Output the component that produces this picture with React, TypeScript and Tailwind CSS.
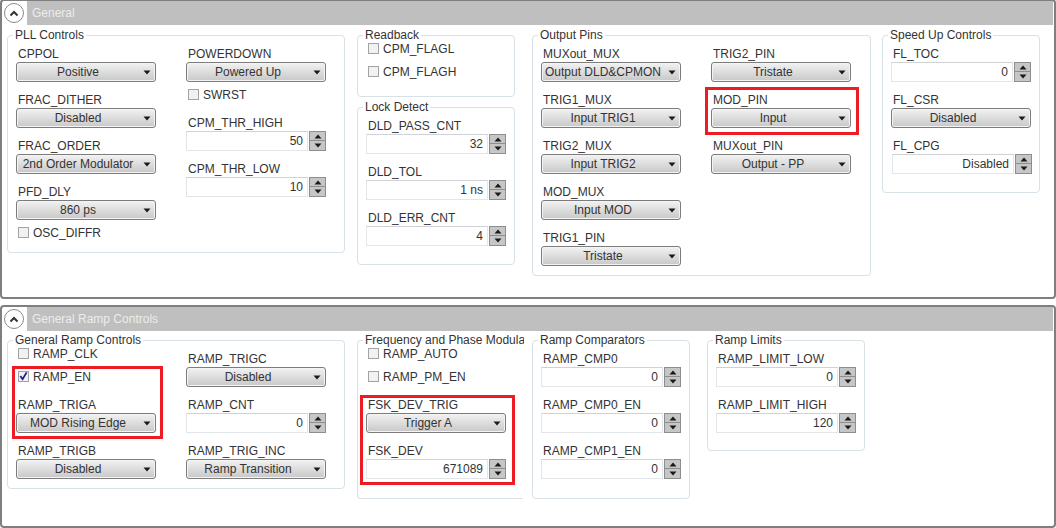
import React from 'react';

const Triangle: React.FC<{ up?: boolean; className?: string }> = ({ up, className }) => (
  <svg width="8" height="5" viewBox="0 0 8 5" className={className}>
    <path d={up ? 'M4 0.5 L7.5 4.5 L0.5 4.5 Z' : 'M0.5 0.5 L7.5 0.5 L4 4.5 Z'} fill="#1a1a1a" />
  </svg>
);

const Combo: React.FC<{ value: string }> = ({ value }) => (
  <div className="relative flex h-[20px] w-[140px] items-center justify-center rounded-[3px] border border-[#7c7c7c] bg-gradient-to-b from-[#f2f2f2] to-[#c8c8c8] pr-[16px] text-[#333333] shadow-[inset_0_0_0_1px_#f4f4f4]">
    <span className="whitespace-nowrap">{value}</span>
    <Triangle className="absolute right-[4px] top-[7px]" />
  </div>
);

const Spinner: React.FC<{ value: string; shifted?: boolean }> = ({ value, shifted }) => (
  <div className={`flex h-[20px] w-[140px] gap-px ${shifted ? 'ml-px' : ''}`}>
    <div className="flex h-[20px] w-[122px] items-center justify-end border border-[#e1e6ea] border-t-[#cfd3d6] bg-white pr-[4px] text-[#333333]">
      {value}
    </div>
    <div className="flex w-[17px] flex-col">
      <div className="flex h-[10px] items-center justify-center border border-[#8e8e8e] bg-[#c6c6c6]">
        <Triangle up />
      </div>
      <div className="flex h-[10px] items-center justify-center border border-t-0 border-[#8e8e8e] bg-[#c6c6c6]">
        <Triangle />
      </div>
    </div>
  </div>
);

const Field: React.FC<{ label: string; children: React.ReactNode }> = ({ label, children }) => (
  <div className="mb-[8px]">
    <div className="h-[18px] pl-[2px] leading-[20px] text-[#333333]">{label}</div>
    {children}
  </div>
);

const Check: React.FC<{ label: string; checked?: boolean; className?: string }> = ({ label, checked, className }) => (
  <div className={`flex h-[22px] items-center pl-[2px] text-[#333333] ${className ?? ''}`}>
    <div className="flex h-[11px] w-[11px] items-center justify-center border border-[#a3a3a3] bg-[#f1f1f1]">
      {checked && (
        <svg width="10" height="10" viewBox="0 0 10 10">
          <path d="M1.5 5 L4 8.5 L8.5 1" fill="none" stroke="#1c1c8c" strokeWidth="2" />
        </svg>
      )}
    </div>
    <span className="ml-[4px] pt-[2px]">{label}</span>
  </div>
);

const Box: React.FC<{ title: string; className: string; legendClass?: string; children: React.ReactNode }> = ({
  title,
  className,
  legendClass,
  children,
}) => (
  <div className={`relative flex gap-[30px] rounded-[4px] border border-[#d8e1e6] pl-[8px] pt-[8px] ${className}`}>
    <div className={`absolute left-[5px] top-[-9px] h-[16px] overflow-hidden whitespace-nowrap bg-white px-[2px] leading-[16px] text-[#333333] ${legendClass ?? ''}`}>
      {title}
    </div>
    {children}
  </div>
);

const Col: React.FC<{ children: React.ReactNode; className?: string }> = ({ children, className }) => (
  <div className={`flex w-[140px] flex-col ${className ?? ''}`}>{children}</div>
);

const PanelHeader: React.FC<{ title: string }> = ({ title }) => (
  <div className="flex h-[24px] shrink-0">
    <div className="relative w-[25px]">
      <div className="absolute left-[2px] top-[2px] flex h-[20px] w-[20px] items-center justify-center rounded-full border border-[#8a8a8a] bg-white">
        <svg width="10" height="7" viewBox="0 0 10 7">
          <path d="M1.5 5.5 L5 2 L8.5 5.5" fill="none" stroke="#333333" strokeWidth="2" />
        </svg>
      </div>
    </div>
    <div className="mr-px flex flex-1 items-center bg-[#bfbfbf] pl-[5px] text-[#ececec]">{title}</div>
  </div>
);

const RedBox: React.FC<{ className: string }> = ({ className }) => (
  <div className={`pointer-events-none absolute border-[3px] border-[#ed1c24] ${className}`} />
);

export default function App() {
  return (
    <div className="relative h-[528px] w-[1056px] overflow-hidden bg-white font-['Liberation_Sans',Arial,sans-serif] text-[12px]">
      {/* General */}
      <div className="-mt-px flex h-[300px] flex-col rounded-[4px] border-2 border-[#7f7f7f]">
        <PanelHeader title="General" />
        <div className="ml-[5px] mt-[10px] flex items-start">
          <Box title="PLL Controls" className="h-[218px] w-[338px]">
            <Col>
              <Field label="CPPOL"><Combo value="Positive" /></Field>
              <Field label="FRAC_DITHER"><Combo value="Disabled" /></Field>
              <Field label="FRAC_ORDER"><Combo value="2nd Order Modulator" /></Field>
              <Field label="PFD_DLY"><Combo value="860 ps" /></Field>
              <Check label="OSC_DIFFR" className="-mt-[7px]" />
            </Col>
            <Col>
              <Field label="POWERDOWN"><Combo value="Powered Up" /></Field>
              <Check label="SWRST" className="-mt-[7px] mb-[8px]" />
              <Field label="CPM_THR_HIGH"><Spinner value="50" /></Field>
              <Field label="CPM_THR_LOW"><Spinner value="10" /></Field>
            </Col>
          </Box>
          <div className="ml-[12px] flex flex-col gap-[10px]">
            <Box title="Readback" className="h-[62px] w-[158px]">
              <Col>
                <Check label="CPM_FLAGL" className="-mt-[7px] mb-px" />
                <Check label="CPM_FLAGH" />
              </Col>
            </Box>
            <Box title="Lock Detect" className="h-[158px] w-[158px]">
              <Col>
                <Field label="DLD_PASS_CNT"><Spinner value="32" /></Field>
                <Field label="DLD_TOL"><Spinner value="1 ns" /></Field>
                <Field label="DLD_ERR_CNT"><Spinner value="4" /></Field>
              </Col>
            </Box>
          </div>
          <Box title="Output Pins" className="ml-[17px] h-[241px] w-[339px]">
            <Col>
              <Field label="MUXout_MUX"><Combo value="Output DLD&CPMON" /></Field>
              <Field label="TRIG1_MUX"><Combo value="Input TRIG1" /></Field>
              <Field label="TRIG2_MUX"><Combo value="Input TRIG2" /></Field>
              <Field label="MOD_MUX"><Combo value="Input MOD" /></Field>
              <Field label="TRIG1_PIN"><Combo value="Tristate" /></Field>
            </Col>
            <Col>
              <Field label="TRIG2_PIN"><Combo value="Tristate" /></Field>
              <Field label="MOD_PIN"><Combo value="Input" /></Field>
              <Field label="MUXout_PIN"><Combo value="Output - PP" /></Field>
            </Col>
          </Box>
          <Box title="Speed Up Controls" className="ml-[11px] h-[158px] w-[158px]">
            <Col>
              <Field label="FL_TOC"><Spinner value="0" /></Field>
              <Field label="FL_CSR"><Combo value="Disabled" /></Field>
              <Field label="FL_CPG"><Spinner value="Disabled" shifted /></Field>
            </Col>
          </Box>
        </div>
      </div>

      {/* General Ramp Controls */}
      <div className="mt-[6px] flex h-[223px] flex-col rounded-[4px] border-2 border-[#7f7f7f]">
        <PanelHeader title="General Ramp Controls" />
        <div className="ml-[5px] mt-[9px] flex items-start">
          <Box title="General Ramp Controls" className="h-[149px] w-[338px]">
            <Col>
              <Check label="RAMP_CLK" className="-mt-[7px] mb-px" />
              <Check label="RAMP_EN" checked className="mb-[8px]" />
              <Field label="RAMP_TRIGA"><Combo value="MOD Rising Edge" /></Field>
              <Field label="RAMP_TRIGB"><Combo value="Disabled" /></Field>
            </Col>
            <Col>
              <Field label="RAMP_TRIGC"><Combo value="Disabled" /></Field>
              <Field label="RAMP_CNT"><Spinner value="0" /></Field>
              <Field label="RAMP_TRIG_INC"><Combo value="Ramp Transition" /></Field>
            </Col>
          </Box>
          <Box
            title="Frequency and Phase Modulation"
            className="ml-[12px] h-[159px] w-[166px] rounded-r-none border-r-0"
            legendClass="max-w-[161px]"
          >
            <Col>
              <Check label="RAMP_AUTO" className="-mt-[7px] mb-px" />
              <Check label="RAMP_PM_EN" className="mb-[8px]" />
              <Field label="FSK_DEV_TRIG"><Combo value="Trigger A" /></Field>
              <Field label="FSK_DEV"><Spinner value="671089" /></Field>
            </Col>
          </Box>
          <Box title="Ramp Comparators" className="ml-[9px] h-[159px] w-[158px]">
            <Col>
              <Field label="RAMP_CMP0"><Spinner value="0" /></Field>
              <Field label="RAMP_CMP0_EN"><Spinner value="0" /></Field>
              <Field label="RAMP_CMP1_EN"><Spinner value="0" /></Field>
            </Col>
          </Box>
          <Box title="Ramp Limits" className="ml-[17px] h-[111px] w-[158px]">
            <Col>
              <Field label="RAMP_LIMIT_LOW"><Spinner value="0" /></Field>
              <Field label="RAMP_LIMIT_HIGH"><Spinner value="120" /></Field>
            </Col>
          </Box>
        </div>
      </div>

      <RedBox className="left-[705px] top-[87px] h-[48px] w-[154px]" />
      <RedBox className="left-[12px] top-[366px] h-[73px] w-[151px]" />
      <RedBox className="left-[360px] top-[395px] h-[90px] w-[155px]" />
    </div>
  );
}
